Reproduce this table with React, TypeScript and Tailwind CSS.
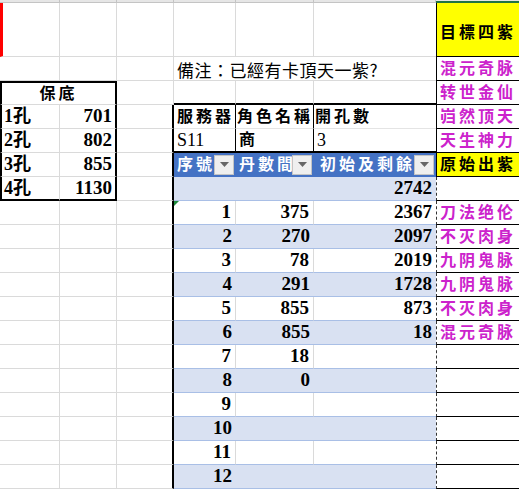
import React from 'react';

const COLS = 'grid grid-cols-[60px_57px_57px_62px_78px_122px_83px]';
const FONT = "font-['Liberation_Serif','Noto_Sans_CJK_TC',serif]";
const GL = 'border-r border-b border-[#dadada]';
const MAG = 'text-[#cc22cc]';
const GCELL = 'border-l border-b border-black justify-center text-[16px] font-bold tracking-[3px]';
const GDASH =
  'border-l border-b border-b-black border-l-[#333] [border-left-style:dashed] justify-center text-[16px] font-bold tracking-[3px]';

const Cell = ({ className = '', children }: { className?: string; children?: React.ReactNode }) => (
  <div className={`relative flex items-center overflow-hidden whitespace-nowrap ${className}`}>{children}</div>
);

const Drop = () => (
  <div className="absolute right-[2px] top-[2px] w-[20px] h-[20px] bg-[#efefef] border border-[#c4c4c4] flex items-center justify-center">
    <svg width="9" height="6" viewBox="0 0 9 6">
      <path d="M0 0 L9 0 L4.5 5 Z" fill="#666" />
    </svg>
  </div>
);

const left = [
  ['1孔', '701'],
  ['2孔', '802'],
  ['3孔', '855'],
  ['4孔', '1130'],
];

const data: [string, string, string, string][] = [
  ['1', '375', '2367', '刀法绝伦'],
  ['2', '270', '2097', '不灭肉身'],
  ['3', '78', '2019', '九阴鬼脉'],
  ['4', '291', '1728', '九阴鬼脉'],
  ['5', '855', '873', '不灭肉身'],
  ['6', '855', '18', '混元奇脉'],
  ['7', '18', '', ''],
  ['8', '0', '', ''],
  ['9', '', '', ''],
  ['10', '', '', ''],
  ['11', '', '', ''],
  ['12', '', '', ''],
];

export default function App() {
  return (
    <div className={`w-[519px] h-[489px] overflow-hidden bg-white text-black ${FONT}`}>
      {/* column header strip */}
      <div className={`${COLS} h-[3px]`}>
        <div className="bg-[#e6e6e6] border-r border-b border-[#c4c4c4]" />
        <div className="bg-[#e6e6e6] border-r border-b border-[#c4c4c4]" />
        <div className="bg-[#e6e6e6] border-r border-b border-[#c4c4c4]" />
        <div className="bg-[#e6e6e6] border-r border-b border-[#c4c4c4]" />
        <div className="bg-[#e6e6e6] border-r border-b border-[#c4c4c4]" />
        <div className="bg-[#e6e6e6] border-r border-b border-[#c4c4c4]" />
        <div className="bg-[#e6e6e6] border-b-2 border-[#217346]" />
      </div>

      {/* row 1 */}
      <div className={`${COLS} h-[54px]`}>
        <Cell className="border-l-[3px] border-l-[#ff0000] border-r border-b border-r-[#dadada] border-b-[#dadada]" />
        <Cell className={GL} />
        <Cell className={GL} />
        <Cell className={GL} />
        <Cell className={GL} />
        <Cell className="border-b border-[#dadada]" />
        <Cell className={`bg-[#ffff00] pt-[6px] ${GCELL}`}>目標四紫</Cell>
      </div>

      {/* row 2 - note */}
      <div className={`${COLS} h-[24px]`}>
        <Cell className={GL} />
        <Cell className={GL} />
        <Cell className={GL} />
        <Cell className="col-span-3 border-b border-[#dadada] pl-[3px] pt-[2px] text-[17px] tracking-[0.5px] font-['Noto_Sans_CJK_TC',sans-serif]">
          備注：已經有卡頂天一紫?
        </Cell>
        <Cell className={`${GCELL} ${MAG}`}>混元奇脉</Cell>
      </div>

      {/* row 3 - 保底 / table top */}
      <div className={`${COLS} h-[24px]`}>
        <Cell className="col-span-2 border-t-2 border-l-2 border-r-2 border-black border-b border-b-[#dadada] justify-center text-[16px] font-bold tracking-[3px]">
          保底
        </Cell>
        <Cell className={GL} />
        <Cell className="border-r border-r-[#dadada] border-b-2 border-b-black" />
        <Cell className="border-r border-r-[#dadada] border-b-2 border-b-black" />
        <Cell className="border-b-2 border-black" />
        <Cell className={`${GCELL} ${MAG}`}>转世金仙</Cell>
      </div>

      {/* rows 4..7 */}
      {left.map(([a, b], i) => (
        <div key={a} className={`${COLS} h-[24px]`}>
          <Cell
            className={`pl-[2px] text-[18px] font-bold border-l-2 border-l-black border-r border-r-[#dadada] ${
              i === 3 ? 'border-b-2 border-b-black' : 'border-b border-b-[#dadada]'
            }`}
          >
            {a}
          </Cell>
          <Cell
            className={`justify-end pr-[3px] text-[19px] font-bold border-r-2 border-r-black ${
              i === 3 ? 'border-b-2 border-b-black' : 'border-b border-b-[#dadada]'
            }`}
          >
            {b}
          </Cell>
          <Cell className="border-r-2 border-r-black border-b border-b-[#dadada]" />
          {i === 0 && (
            <>
              <Cell className="border-r border-r-black border-b border-b-[#e4e4e4] pl-[3px] text-[16px] font-bold tracking-[3px]">
                服務器
              </Cell>
              <Cell className="border-r border-r-black border-b border-b-[#e4e4e4] pl-[1px] text-[16px] font-bold tracking-[3px]">
                角色名稱
              </Cell>
              <Cell className="border-b border-b-[#e4e4e4] pl-[1px] text-[16px] font-bold tracking-[3px]">開孔數</Cell>
              <Cell className={`${GCELL} ${MAG}`}>岿然顶天</Cell>
            </>
          )}
          {i === 1 && (
            <>
              <Cell className="border-r border-r-black border-b-2 border-b-black pl-[3px] text-[18px]">S11</Cell>
              <Cell className="border-r border-r-black border-b-2 border-b-black pl-[3px] text-[16px] font-bold">商</Cell>
              <Cell className="border-b-2 border-b-black pl-[3px] text-[18px]">3</Cell>
              <Cell className={`${GCELL} ${MAG}`}>天生神力</Cell>
            </>
          )}
          {i === 2 && (
            <>
              <Cell className="bg-[#4472c4] text-white pl-[3px] text-[16px] font-bold tracking-[3px]">
                序號
                <Drop />
              </Cell>
              <Cell className="bg-[#4472c4] text-white pl-[3px] text-[16px] font-bold tracking-[3px]">
                丹數間
                <Drop />
              </Cell>
              <Cell className="bg-[#4472c4] text-white pl-[6px] text-[16px] font-bold tracking-[3px]">
                初始及剩餘
                <Drop />
              </Cell>
              <Cell className={`bg-[#ffff00] ${GCELL}`}>原始出紫</Cell>
            </>
          )}
          {i === 3 && (
            <>
              <Cell className="bg-[#d9e1f2] border-b border-b-[#a9bfe6]" />
              <Cell className="bg-[#d9e1f2] border-b border-b-[#a9bfe6]" />
              <Cell className="bg-[#d9e1f2] border-b border-b-[#a9bfe6] justify-end pr-[4px] text-[19px] font-bold">
                2742
              </Cell>
              <Cell className={GDASH} />
            </>
          )}
        </div>
      ))}

      {/* data rows */}
      {data.map(([n, gap, rest, name], i) => {
        const band = i % 2 === 1;
        return (
          <div key={n} className={`${COLS} h-[24px]`}>
            <Cell className={GL} />
            <Cell className={GL} />
            <Cell className="border-r-2 border-r-black border-b border-b-[#dadada]" />
            <Cell
              className={`justify-end pr-[4px] text-[19px] font-bold border-b border-b-[#a9bfe6] ${
                band ? 'bg-[#d9e1f2]' : 'border-r border-r-[#dadada]'
              }`}
            >
              {i === 0 && (
                <svg className="absolute left-0 top-0" width="5" height="5" viewBox="0 0 5 5">
                  <path d="M0 0 L5 0 L0 5 Z" fill="#1e8a3c" />
                </svg>
              )}
              {n}
            </Cell>
            <Cell
              className={`justify-end pr-[4px] text-[19px] font-bold border-b border-b-[#a9bfe6] ${
                band ? 'bg-[#d9e1f2]' : 'border-r border-r-[#dadada]'
              }`}
            >
              {gap}
            </Cell>
            <Cell
              className={`justify-end pr-[4px] text-[19px] font-bold border-b border-b-[#a9bfe6] ${
                band ? 'bg-[#d9e1f2]' : ''
              }`}
            >
              {rest}
            </Cell>
            <Cell className={`${GDASH} ${MAG}`}>{name}</Cell>
          </div>
        );
      })}
    </div>
  );
}
